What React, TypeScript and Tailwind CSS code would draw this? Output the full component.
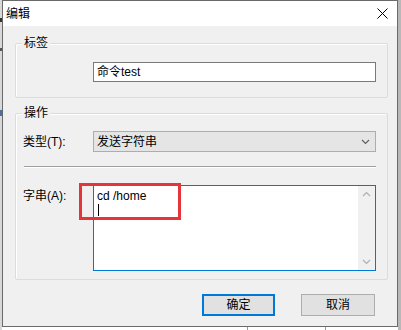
import React from "react";

const font = { fontFamily: '"Liberation Sans", "Noto Sans CJK SC", "Noto Sans", sans-serif' };

function Chevron({ up = false, color = "#606060" }: { up?: boolean; color?: string }) {
  return (
    <svg width="9" height="6" viewBox="0 0 9 6">
      <path d={up ? "M1 5 L4.5 1.5 L8 5" : "M1 1 L4.5 4.5 L8 1"} fill="none" stroke={color} strokeWidth="1.2" />
    </svg>
  );
}

export default function App() {
  return (
    <div className="relative w-[401px] h-[330px] overflow-hidden bg-white text-black text-[12px]" style={font}>
      {/* background app fragments */}
      <div className="absolute left-0 top-0 w-[2px] h-[330px] bg-[#d8d8d8]" />
      <div className="absolute left-0 top-[18px] w-[2px] h-[4px] bg-[#333]" />
      <div className="absolute left-0 top-[48px] w-[2px] h-[3px] bg-[#555]" />
      <div className="absolute left-0 top-[110px] w-[2px] h-[6px] bg-[#4a6fa5]" />
      <div className="absolute right-0 top-0 w-[3px] h-[330px] bg-[#b8b8b8]" />
      <div className="absolute left-[247px] bottom-0 w-[1px] h-[4px] bg-[#999]" />
      <div className="absolute left-[325px] bottom-0 w-[1px] h-[4px] bg-[#999]" />

      {/* dialog */}
      <div className="absolute left-[2px] top-0 w-[396px] h-[327px] border border-[#6a6a6a] bg-[#f0f0f0] flex flex-col">
        <div className="h-[25px] bg-white flex items-center justify-between pl-[3px] pr-[9px] shrink-0">
          <span className="text-[12px] leading-[16px]">编辑</span>
          <svg width="11" height="11" viewBox="0 0 11 11">
            <path d="M0.5 0.5 L10.5 10.5 M10.5 0.5 L0.5 10.5" stroke="#000" strokeWidth="1" />
          </svg>
        </div>

        <div className="flex-1 pl-[12px] pr-[9px] relative">
          {/* group 1 */}
          <div className="relative mt-[17px] h-[55px] border border-[#dcdcdc] rounded-[2px] pt-[18px] pl-[77px] pr-[11px] shadow-[inset_1px_1px_0_#fff]">
            <span className="absolute left-[6px] top-[-9px] px-[2px] bg-[#f0f0f0] leading-[16px]">标签</span>
            <div className="h-[20px] w-[283px] bg-white border border-[#7a7a7a] flex items-center pl-[3px] leading-[16px]">
              命令test
            </div>
          </div>

          {/* group 2 */}
          <div className="relative mt-[15px] h-[167px] border border-[#dcdcdc] rounded-[2px] pt-[17px] pl-[7px] pr-[11px] shadow-[inset_1px_1px_0_#fff]">
            <span className="absolute left-[6px] top-[-9px] px-[2px] bg-[#f0f0f0] leading-[16px]">操作</span>
            <div className="flex items-center">
              <span className="w-[70px] leading-[16px]">类型(T):</span>
              <div className="h-[21px] w-[283px] bg-[#e5e5e5] border border-[#adadad] flex items-center justify-between pl-[3px] pr-[5px] leading-[16px]">
                <span>发送字符串</span>
                <Chevron />
              </div>
            </div>
            <div className="ml-[1px] mt-[14px] w-[352px] border-t border-[#a0a0a0] border-b border-b-white" />
            <div className="flex items-start mt-[17px]">
              <span className="w-[70px] leading-[16px] mt-[3px]">字串(A):</span>
              <div className="h-[86px] w-[283px] bg-white border border-[#0078d7] flex">
                <div className="flex-1 pl-[3px] pt-[3px] leading-[14px]">
                  <div>cd /home</div>
                  <div className="ml-[1px] mt-[1px] w-[1px] h-[12px] bg-black" />
                </div>
                <div className="w-[17px] bg-[#f0f0f0] flex flex-col items-center justify-between py-[5px]">
                  <Chevron up color="#b0b0b0" />
                  <Chevron color="#b0b0b0" />
                </div>
              </div>
            </div>
          </div>

          {/* buttons */}
          <div className="mt-[14px] flex justify-end gap-[26px] pr-[13px]">
            <div className="w-[73px] h-[22px] bg-[#e1e1e1] border-2 border-[#0078d7] flex items-center justify-center leading-[16px]">确定</div>
            <div className="w-[74px] h-[22px] bg-[#e1e1e1] border border-[#adadad] flex items-center justify-center leading-[16px]">取消</div>
          </div>
        </div>
      </div>

      {/* red highlight */}
      <div className="absolute left-[79px] top-[183px] w-[102px] h-[37px] border-[3px] border-[#e5343a]" />
    </div>
  );
}
